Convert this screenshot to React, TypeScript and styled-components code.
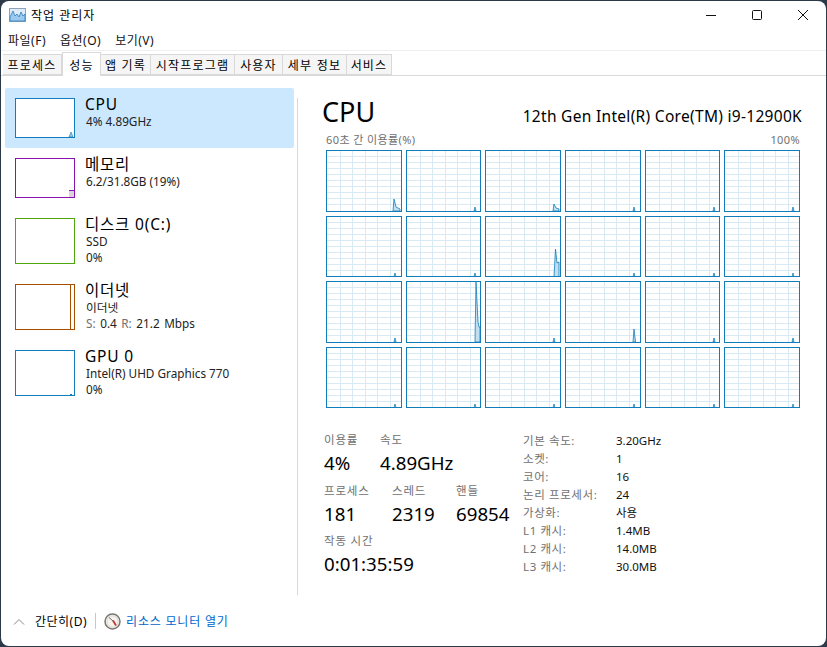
import React from 'react'
import styled, {createGlobalStyle} from 'styled-components'

const GlobalStyle = createGlobalStyle`
  html, body {
    margin: 0;
    height: 100%;
    background: #2c3949;
    overflow: hidden;
  }
  * {
    box-sizing: border-box;
  }
`

const Page = styled.div`
  width: 827px;
  height: 647px;
  padding: 1px 1px 1px 1px;
  font-family: 'Noto Sans', 'Noto Sans CJK KR', sans-serif;
  color: #000;
`
const Window = styled.div`
  display: flex;
  flex-direction: column;
  height: 100%;
  background: #fff;
  border-radius: 8px;
  overflow: hidden;
`
const TitleBar = styled.div`
  display: flex;
  align-items: center;
  height: 29px;
  flex-shrink: 0;
  padding: 0 0 2px 8px;
`
const AppTitle = styled.span`
  margin-left: 5px;
  font-size: 12px;
  letter-spacing: 1px;
  flex: 1;
`
const WinButton = styled.div`
  display: flex;
  align-items: center;
  justify-content: center;
  width: 46px;
  height: 27px;
`
const MenuBar = styled.div`
  display: flex;
  height: 21px;
  flex-shrink: 0;
  padding-left: 7px;
  gap: 14px;
  align-items: center;
  border-bottom: 1px solid #f0f0f0;
`
const MenuItem = styled.span`
  font-size: 12px;
  letter-spacing: 0.5px;
  color: #111;
`
const TabStrip = styled.div`
  display: flex;
  align-items: flex-end;
  height: 25px;
  flex-shrink: 0;
  padding-left: 2px;
  border-bottom: 1px solid #d9d9d9;
`
const Tab = styled.div<{$active?: boolean; $w: number}>`
  display: flex;
  align-items: center;
  justify-content: center;
  width: ${p => p.$w}px;
  height: ${p => (p.$active ? 24 : 21)}px;
  margin-bottom: ${p => (p.$active ? -1 : 0)}px;
  font-size: 12px;
  letter-spacing: 1.2px;
  white-space: nowrap;
  background: ${p => (p.$active ? '#fff' : '#f5f5f5')};
  border: 1px solid #d9d9d9;
  border-left-width: ${p => (p.$active ? 1 : 0)}px;
  border-bottom: ${p => (p.$active ? 'none' : '1px solid #d9d9d9')};
`
const Body = styled.div`
  display: flex;
  flex: 1;
  min-height: 0;
`
const Sidebar = styled.div`
  display: flex;
  flex-direction: column;
  width: 289px;
  margin: 12px 0 0 4px;
`
const SideItem = styled.div<{$active?: boolean; $h: number}>`
  display: flex;
  height: ${p => p.$h}px;
  padding: 10px 0 0 10px;
  gap: 10px;
  border-radius: 2px;
  background: ${p => (p.$active ? '#cce8ff' : 'transparent')};
`
const MiniGraph = styled.div<{$color: string; $h: number}>`
  width: 60px;
  height: ${p => p.$h}px;
  flex-shrink: 0;
  background: #fff;
  border: 1px solid ${p => p.$color};
`
const GraphSvg = styled.svg`
  display: block;
  width: 100%;
  height: 100%;
`
const SideText = styled.div`
  display: flex;
  flex-direction: column;
  margin-top: -4px;
`
const SideTitle = styled.div`
  font-size: 15.5px;
  line-height: 20px;
  letter-spacing: 0.8px;
  height: 20px;
`
const SideSub = styled.div`
  font-size: 11.75px;
  line-height: 15.5px;
  margin-left: 1px;
  color: #222;
`
const SideRate = styled(SideSub)`
  word-spacing: 1.5px;
`
const SideMuted = styled.span`
  color: #707070;
`
const Divider = styled.div`
  width: 1px;
  height: 497px;
  margin: 22px 0 0 3px;
  background: #d9d9d9;
`
const Main = styled.div`
  flex: 1;
  padding: 18px 24px 0 24px;
`
const Header = styled.div`
  display: flex;
  justify-content: space-between;
  align-items: baseline;
  height: 35px;
`
const HeaderTitle = styled.div`
  font-size: 27px;
  line-height: 35px;
`
const HeaderName = styled.div`
  font-size: 15.5px;
  letter-spacing: 0.3px;
`
const AxisRow = styled.div`
  display: flex;
  justify-content: space-between;
  margin: 3px 2px 0 4px;
  height: 16px;
  font-size: 11px;
  line-height: 16px;
  letter-spacing: 0.4px;
  color: #707070;
`
const CoreGrid = styled.div`
  display: grid;
  grid-template-columns: repeat(6, 1fr);
  grid-template-rows: repeat(4, 1fr);
  gap: 4px;
  height: 258px;
  margin: 2px 2px 0 4px;
`
const CoreCell = styled.div`
  border: 1px solid #117dbb;
  background: #fff;
  min-width: 0;
  min-height: 0;
  overflow: hidden;
`
const Stats = styled.div`
  display: flex;
  margin: 24px 0 0 2px;
`
const StatsLeft = styled.div`
  width: 199px;
  display: flex;
  flex-direction: column;
  gap: 7.5px;
`
const StatRow = styled.div`
  display: flex;
`
const Stat = styled.div<{$w: number}>`
  width: ${p => p.$w}px;
  flex-shrink: 0;
`
const StatLabel = styled.div`
  font-size: 11.5px;
  line-height: 16px;
  letter-spacing: 0.8px;
  color: #707070;
`
const StatValue = styled.div`
  font-size: 18.7px;
  line-height: 24px;
  margin-top: 3px;
  white-space: nowrap;
`
const Specs = styled.div`
  display: grid;
  grid-template-columns: 93px auto;
  grid-auto-rows: 18px;
  align-content: start;
`
const SpecLabel = styled.div`
  font-size: 11.5px;
  line-height: 18px;
  letter-spacing: 0.6px;
  color: #707070;
  white-space: nowrap;
`
const SpecValue = styled.div`
  font-size: 11.5px;
  line-height: 18px;
  color: #111;
`
const Footer = styled.div`
  display: flex;
  align-items: center;
  height: 50px;
  flex-shrink: 0;
  padding-left: 12px;
`
const FooterToggle = styled.span`
  margin-left: 10px;
  font-size: 12px;
  letter-spacing: 0.5px;
`
const FooterRule = styled.div`
  width: 1px;
  height: 16px;
  margin: 0 8px;
  background: #c8c8c8;
`
const MonitorLink = styled.span`
  margin-left: 5px;
  font-size: 12px;
  letter-spacing: 0.8px;
  color: #0066cc;
`

const TABS = [
  {label: '프로세스', w: 59},
  {label: '성능', w: 39, active: true},
  {label: '앱 기록', w: 50},
  {label: '시작프로그램', w: 84},
  {label: '사용자', w: 48},
  {label: '세부 정보', w: 64},
  {label: '서비스', w: 45},
]

const TINY = 'M67 60L68 56L69 60Z'
const SPIKES: Record<number, string> = {
  0: 'M66 60L67 48L69 56L73 58L73 60Z',
  2: 'M67 60L68 53L70 57L73 58L73 60Z',
  8: 'M68 60L69.5 32L71 46L73 45L73 60Z',
  13: 'M68 60L69 0L71 40L72 45L73 45L73 60Z',
  15: 'M67 60L68 47L69.5 60Z',
}

const SPECS = [
  ['기본 속도:', '3.20GHz'],
  ['소켓:', '1'],
  ['코어:', '16'],
  ['논리 프로세서:', '24'],
  ['가상화:', '사용'],
  ['L1 캐시:', '1.4MB'],
  ['L2 캐시:', '14.0MB'],
  ['L3 캐시:', '30.0MB'],
]

const CoreGraph = ({spark}: {spark: string}) => (
  <GraphSvg>
    <g stroke="#d9eaf4" strokeWidth="1" shapeRendering="crispEdges">
      {[13, 25, 38, 50, 63].map(x => (
        <line key={x} x1={x} x2={x} y1={0} y2={80} />
      ))}
      {[5, 11, 17, 23, 29, 35, 41, 47, 53].map(y => (
        <line key={y} x1={0} x2={80} y1={y} y2={y} />
      ))}
    </g>
    <path d={spark} fill="#c2dff0" stroke="#117dbb" strokeWidth="0.8" />
  </GraphSvg>
)

const TitleIcon = () => (
  <svg width="17" height="14" viewBox="0 0 17 14">
    <rect x="0.5" y="0.5" width="16" height="13" fill="#dcebf7" stroke="#8fa3b5" />
    <path d="M1 13V9L4 3L6 8L8 6L10 9L12 4L14 8L16 6V13Z" fill="#9cc9ee" stroke="#2f7fc4" strokeWidth="0.8" />
  </svg>
)

const MonitorIcon = () => (
  <svg width="17" height="17" viewBox="0 0 17 17">
    <circle cx="8.5" cy="8.5" r="7.5" fill="#f7f4f0" stroke="#7a7672" strokeWidth="1.5" />
    <circle cx="8.5" cy="8.5" r="5.6" fill="none" stroke="#d2cdc6" strokeWidth="0.8" />
    <path d="M9 7.5L12 12.5" stroke="#c8372d" strokeWidth="1.8" />
    <path d="M5 4.5L9 8" stroke="#5b5b5b" strokeWidth="0.9" />
  </svg>
)

const App = () => {
  return (
    <Page>
      <GlobalStyle />
      <Window>
        <TitleBar>
          <TitleIcon />
          <AppTitle>작업 관리자</AppTitle>
          <WinButton>
            <svg width="10" height="10" viewBox="0 0 10 10">
              <path d="M0 5.5H10" stroke="#111" strokeWidth="1" />
            </svg>
          </WinButton>
          <WinButton>
            <svg width="10" height="10" viewBox="0 0 10 10">
              <rect x="0.5" y="0.5" width="9" height="9" rx="1" fill="none" stroke="#111" />
            </svg>
          </WinButton>
          <WinButton>
            <svg width="10" height="10" viewBox="0 0 10 10">
              <path d="M0 0L10 10M10 0L0 10" stroke="#111" strokeWidth="1" />
            </svg>
          </WinButton>
        </TitleBar>
        <MenuBar>
          <MenuItem>파일(F)</MenuItem>
          <MenuItem>옵션(O)</MenuItem>
          <MenuItem>보기(V)</MenuItem>
        </MenuBar>
        <TabStrip>
          {TABS.map(t => (
            <Tab key={t.label} $w={t.w} $active={t.active}>
              {t.label}
            </Tab>
          ))}
        </TabStrip>
        <Body>
          <Sidebar>
            <SideItem $active $h={60}>
              <MiniGraph $color="#117dbb" $h={40}>
                <GraphSvg>
                  <path d="M53 38L55 33L57 38Z" fill="#9cc6e2" stroke="#117dbb" strokeWidth="0.6" />
                </GraphSvg>
              </MiniGraph>
              <SideText>
                <SideTitle>CPU</SideTitle>
                <SideSub>4% 4.89GHz</SideSub>
              </SideText>
            </SideItem>
            <SideItem $h={60}>
              <MiniGraph $color="#8b12ae" $h={40}>
                <GraphSvg>
                  <path d="M53 38V31.5H58V38Z" fill="#d9d3de" />
                  <path d="M53 31.5H58" stroke="#8b12ae" strokeWidth="1" />
                </GraphSvg>
              </MiniGraph>
              <SideText>
                <SideTitle>메모리</SideTitle>
                <SideSub>6.2/31.8GB (19%)</SideSub>
              </SideText>
            </SideItem>
            <SideItem $h={66}>
              <MiniGraph $color="#4da60c" $h={46} />
              <SideText>
                <SideTitle>디스크 0(C:)</SideTitle>
                <SideSub>SSD</SideSub>
                <SideSub>0%</SideSub>
              </SideText>
            </SideItem>
            <SideItem $h={66}>
              <MiniGraph $color="#a74f01" $h={46}>
                <GraphSvg>
                  <path d="M54.5 0V44" stroke="#a74f01" strokeWidth="1" />
                </GraphSvg>
              </MiniGraph>
              <SideText>
                <SideTitle>이더넷</SideTitle>
                <SideSub>이더넷</SideSub>
                <SideRate>
                  <SideMuted>S:</SideMuted> 0.4 <SideMuted>R:</SideMuted> 21.2 Mbps
                </SideRate>
              </SideText>
            </SideItem>
            <SideItem $h={66}>
              <MiniGraph $color="#117dbb" $h={46}>
                <GraphSvg>
                  <path d="M54 43.5H56" stroke="#117dbb" strokeWidth="1" />
                </GraphSvg>
              </MiniGraph>
              <SideText>
                <SideTitle>GPU 0</SideTitle>
                <SideSub>Intel(R) UHD Graphics 770</SideSub>
                <SideSub>0%</SideSub>
              </SideText>
            </SideItem>
          </Sidebar>
          <Divider />
          <Main>
            <Header>
              <HeaderTitle>CPU</HeaderTitle>
              <HeaderName>12th Gen Intel(R) Core(TM) i9-12900K</HeaderName>
            </Header>
            <AxisRow>
              <span>60초 간 이용률(%)</span>
              <span>100%</span>
            </AxisRow>
            <CoreGrid>
              {Array.from({length: 24}, (_, i) => (
                <CoreCell key={i}>
                  <CoreGraph spark={SPIKES[i] ?? TINY} />
                </CoreCell>
              ))}
            </CoreGrid>
            <Stats>
              <StatsLeft>
                <StatRow>
                  <Stat $w={56}>
                    <StatLabel>이용률</StatLabel>
                    <StatValue>4%</StatValue>
                  </Stat>
                  <Stat $w={100}>
                    <StatLabel>속도</StatLabel>
                    <StatValue>4.89GHz</StatValue>
                  </Stat>
                </StatRow>
                <StatRow>
                  <Stat $w={68}>
                    <StatLabel>프로세스</StatLabel>
                    <StatValue>181</StatValue>
                  </Stat>
                  <Stat $w={64}>
                    <StatLabel>스레드</StatLabel>
                    <StatValue>2319</StatValue>
                  </Stat>
                  <Stat $w={64}>
                    <StatLabel>핸들</StatLabel>
                    <StatValue>69854</StatValue>
                  </Stat>
                </StatRow>
                <StatRow>
                  <Stat $w={120}>
                    <StatLabel>작동 시간</StatLabel>
                    <StatValue>0:01:35:59</StatValue>
                  </Stat>
                </StatRow>
              </StatsLeft>
              <Specs>
                {SPECS.map(([label, value]) => (
                  <React.Fragment key={label}>
                    <SpecLabel>{label}</SpecLabel>
                    <SpecValue>{value}</SpecValue>
                  </React.Fragment>
                ))}
              </Specs>
            </Stats>
          </Main>
        </Body>
        <Footer>
          <svg width="12" height="7" viewBox="0 0 12 7">
            <path d="M1 6.5L6 1.5L11 6.5" fill="none" stroke="#888" strokeWidth="1" />
          </svg>
          <FooterToggle>간단히(D)</FooterToggle>
          <FooterRule />
          <MonitorIcon />
          <MonitorLink>리소스 모니터 열기</MonitorLink>
        </Footer>
      </Window>
    </Page>
  )
}

export default App
